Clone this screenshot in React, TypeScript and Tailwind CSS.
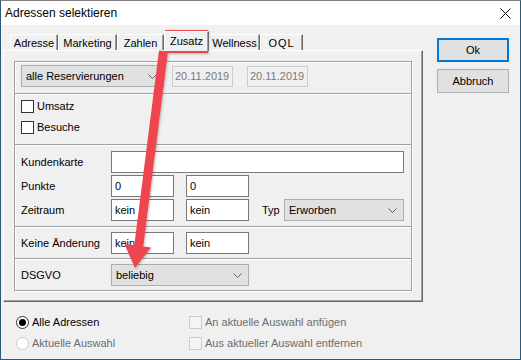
import React from "react";

// ─── Small Win32-ish controls ────────────────────────────────────────────────

function Chevron() {
  return (
    <svg width="9" height="5" viewBox="0 0 9 5" className="shrink-0">
      <path d="M0.5 0.5 L4.5 4.5 L8.5 0.5" fill="none" stroke="#606060" strokeWidth="1" />
    </svg>
  );
}

function Select({ value, w }: { value: string; w: string }) {
  return (
    <div
      className={`${w} h-[22px] bg-[#e1e1e1] border border-[#adadad] flex items-center justify-between pl-[4px] pr-[6px]`}
    >
      <span>{value}</span>
      <Chevron />
    </div>
  );
}

function Input({ value, w }: { value?: string; w: string }) {
  return (
    <div className={`${w} h-[22px] bg-white border border-[#7a7a7a] flex items-center pl-[3px]`}>
      {value}
    </div>
  );
}

function DateBox({ value }: { value: string }) {
  return (
    <div className="w-[61px] h-[21px] mt-px bg-[#f0f0f0] border border-[#cccccc] flex items-center pl-[2px] text-[#7a7a7a]">
      {value}
    </div>
  );
}

function Check({ label, disabled }: { label: string; disabled?: boolean }) {
  return (
    <div className="flex items-center gap-[3px] h-[13px]">
      <div
        className={
          disabled
            ? "w-[13px] h-[13px] border border-[#cccccc] bg-[#f4f4f4]"
            : "w-[13px] h-[13px] border border-[#333333] bg-white"
        }
      />
      <span className={disabled ? "text-[#6d6d6d]" : "text-black"}>{label}</span>
    </div>
  );
}

function Radio({ label, checked, disabled }: { label: string; checked?: boolean; disabled?: boolean }) {
  return (
    <div className="flex items-center gap-[3px]">
      <div
        className={
          disabled
            ? "w-[13px] h-[13px] rounded-full border border-[#cccccc] bg-white"
            : "w-[13px] h-[13px] rounded-full border border-[#333333] bg-white flex items-center justify-center"
        }
      >
        {checked && <div className="w-[7px] h-[7px] rounded-full bg-black" />}
      </div>
      <span className={disabled ? "text-[#6d6d6d]" : "text-black"}>{label}</span>
    </div>
  );
}

function Sep() {
  return (
    <div className="shrink-0">
      <div className="h-px bg-[#a0a0a0]" />
      <div className="h-px bg-white" />
    </div>
  );
}

const TABS = [
  { label: "Adresse", cls: "w-[48px]" },
  { label: "Marketing", cls: "w-[59px]" },
  { label: "Zahlen", cls: "w-[47px]" },
  { label: "Zusatz", cls: "w-[45px]", active: true },
  { label: "Wellness", cls: "w-[51px]" },
  { label: "OQL", cls: "w-[43px] tracking-[1px]" },
];

// ─── Dialog ──────────────────────────────────────────────────────────────────

export default function App() {
  return (
    <div className="relative w-[521px] h-[360px] bg-[#f0f0f0] border border-[#2c5876] border-t-[#7f7f7f] flex flex-col overflow-hidden font-['Liberation_Sans',Arial,sans-serif] text-[11px] text-black leading-none">
      {/* Title bar */}
      <div className="h-[24px] shrink-0 bg-white flex items-center justify-between pl-[4px] pr-[9px]">
        <span className="text-[12px]">Adressen selektieren</span>
        <svg width="11" height="11" viewBox="0 0 11 11">
          <path d="M0.5 0.5 L10.5 10.5 M10.5 0.5 L0.5 10.5" stroke="#111" strokeWidth="1" />
        </svg>
      </div>

      {/* Body */}
      <div className="flex flex-1">
        <div className="pl-[2px] pt-[6px] flex flex-col">
          {/* Tab strip */}
          <div className="h-[19px] flex items-end pl-[7px]">
            {TABS.map((t) =>
              t.active ? (
                <div
                  key={t.label}
                  className={`${t.cls} h-[20px] -mb-px relative z-10 bg-[#f0f0f0] border-t border-l border-white border-r border-r-[#696969] shadow-[inset_-1px_0_0_#a0a0a0] flex items-start justify-center pt-[4px]`}
                >
                  {t.label}
                </div>
              ) : (
                <div
                  key={t.label}
                  className={`${t.cls} h-[16px] border-t border-l border-white border-r border-r-[#696969] shadow-[inset_-1px_0_0_#a0a0a0] rounded-tl-[2px] flex items-center justify-center pt-[2px]`}
                >
                  {t.label}
                </div>
              )
            )}
          </div>

          {/* Tab panel */}
          <div className="w-[420px] h-[252px] border-t border-l border-white border-r border-b border-r-[#696969] border-b-[#696969] shadow-[inset_-1px_-1px_0_#a0a0a0] pt-[10px] pl-[10px]">
            <div className="w-[398px] h-[230px] border border-[#a0a0a0] shadow-[inset_1px_1px_0_#ffffff,1px_1px_0_#ffffff] flex flex-col">
              {/* Reservierungen */}
              <div className="h-[31px] shrink-0 pt-[3px] pl-[6px] flex items-start">
                <Select value="alle Reservierungen" w="w-[143px]" />
                <div className="ml-[8px]">
                  <DateBox value="20.11.2019" />
                </div>
                <div className="ml-[14px]">
                  <DateBox value="20.11.2019" />
                </div>
              </div>
              <Sep />

              {/* Umsatz / Besuche */}
              <div className="h-[49px] shrink-0 pt-[5px] pl-[6px] flex flex-col gap-[8px]">
                <Check label="Umsatz" />
                <Check label="Besuche" />
              </div>
              <Sep />

              {/* Kundenkarte / Punkte / Zeitraum */}
              <div className="h-[80px] shrink-0 pt-[5px] pl-[6px] flex flex-col gap-[2px]">
                <div className="flex items-center">
                  <span className="w-[90px]">Kundenkarte</span>
                  <Input w="w-[293px]" />
                </div>
                <div className="flex items-center">
                  <span className="w-[90px]">Punkte</span>
                  <Input value="0" w="w-[63px]" />
                  <div className="ml-[12px]">
                    <Input value="0" w="w-[63px]" />
                  </div>
                </div>
                <div className="flex items-center">
                  <span className="w-[90px]">Zeitraum</span>
                  <Input value="kein" w="w-[63px]" />
                  <div className="ml-[12px]">
                    <Input value="kein" w="w-[63px]" />
                  </div>
                  <span className="ml-[13px] w-[22px]">Typ</span>
                  <Select value="Erworben" w="w-[120px]" />
                </div>
              </div>
              <Sep />

              {/* Keine Änderung */}
              <div className="h-[30px] shrink-0 pt-[4px] pl-[6px] flex items-start">
                <span className="w-[90px] h-[22px] flex items-center">Keine Änderung</span>
                <Input value="kein" w="w-[63px]" />
                <div className="ml-[12px]">
                  <Input value="kein" w="w-[63px]" />
                </div>
              </div>
              <Sep />

              {/* DSGVO */}
              <div className="h-[30px] shrink-0 pt-[4px] pl-[6px] flex items-start">
                <span className="w-[90px] h-[22px] flex items-center">DSGVO</span>
                <Select value="beliebig" w="w-[138px]" />
              </div>
            </div>
          </div>

          {/* Scope options */}
          <div className="mt-[10px] ml-[13px] grid grid-cols-[173px_auto] auto-rows-[21px] items-center">
            <Radio label="Alle Adressen" checked />
            <Check label="An aktuelle Auswahl anfügen" disabled />
            <Radio label="Aktuelle Auswahl" disabled />
            <Check label="Aus aktueller Auswahl entfernen" disabled />
          </div>
        </div>

        {/* Buttons */}
        <div className="ml-[14px] pt-[13px] flex flex-col gap-[7px]">
          <button className="w-[72px] h-[24px] bg-[#e1e1e1] border-2 border-[#0078d7] text-[11px]">Ok</button>
          <button className="w-[72px] h-[24px] bg-[#e1e1e1] border border-[#adadad] text-[11px]">Abbruch</button>
        </div>
      </div>

      {/* Annotation: highlight + arrow */}
      <svg
        className="absolute left-[-1px] top-[-1px] pointer-events-none"
        width="521"
        height="360"
        viewBox="0 0 521 360"
      >
        <defs>
          <filter id="sh" x="-20%" y="-20%" width="140%" height="140%">
            <feDropShadow dx="1" dy="1" stdDeviation="1" floodColor="#000" floodOpacity="0.25" />
          </filter>
        </defs>
        <g filter="url(#sh)">
          <rect x="166.25" y="31.25" width="40.5" height="20.5" fill="none" stroke="#e8474c" strokeWidth="2.5" />
          <line x1="163.5" y1="51" x2="138.5" y2="248" stroke="#ef4550" strokeWidth="9" />
          <polygon points="124.5,244 151,247.5 135,268" fill="#ef4550" />
        </g>
      </svg>
    </div>
  );
}
